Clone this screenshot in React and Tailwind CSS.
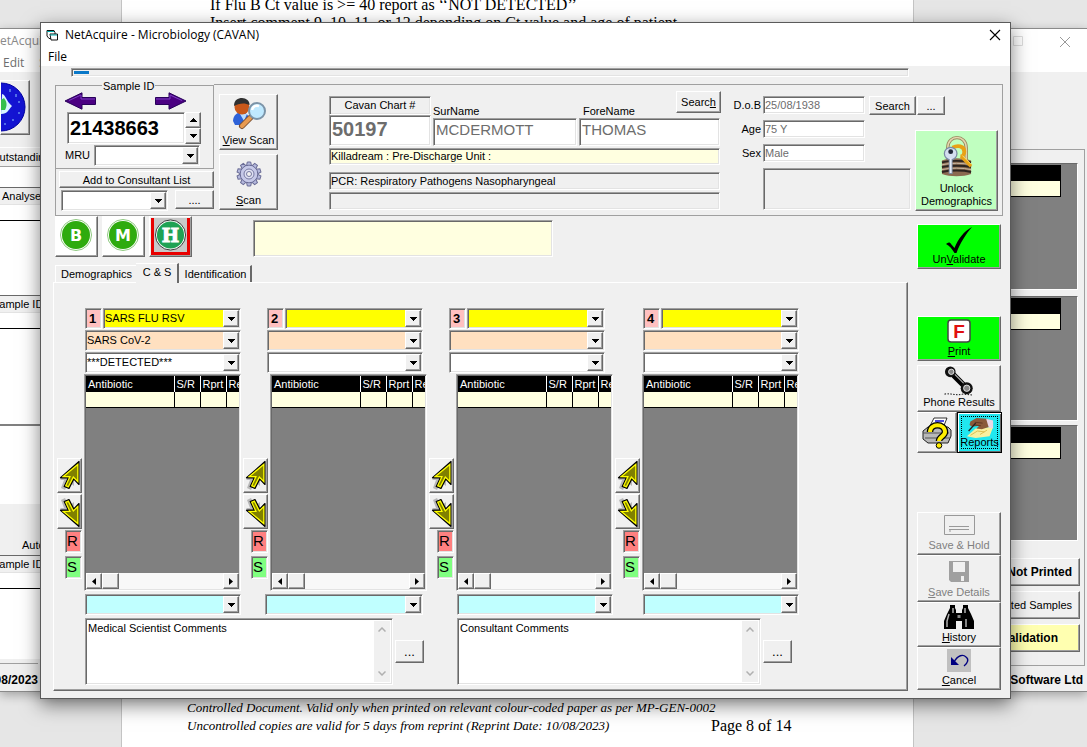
import React from "react";

const raised =
  "border border-t-white border-l-white border-r-[#696969] border-b-[#696969] shadow-[inset_-1px_-1px_0_#a0a0a0] bg-[#f0f0f0]";
const sunken =
  "border border-t-[#a0a0a0] border-l-[#a0a0a0] border-r-white border-b-white shadow-[inset_1px_1px_0_#696969,inset_-1px_-1px_0_#e3e3e3] outline-none";

function Key({ children }) {
  return <span className="underline">{children}</span>;
}

function ArrowHead({ className = "" }) {
  return (
    <svg viewBox="0 0 7 4" className={"h-1 w-[7px] " + className} shapeRendering="crispEdges" aria-hidden="true">
      <path d="M0 0h7v1H6v1H5v1H4v1H3V3H2V2H1V1H0z" fill="#000" />
    </svg>
  );
}

function Combo({ label, value = "", className = "", tone = "bg-white" }) {
  return (
    <div className={"relative h-[21px] " + className}>
      <select
        aria-label={label}
        defaultValue={value}
        className={"block h-full w-full appearance-none truncate rounded-none pr-5 pb-0.5 pl-px text-[11px] leading-4 text-black " + sunken + " " + tone}
      >
        <option value={value}>{value}</option>
      </select>
      <span className={"pointer-events-none absolute top-[2px] right-[2px] bottom-[2px] flex w-4 items-center justify-center " + raised}>
        <ArrowHead />
      </span>
    </div>
  );
}

function SideArrow({ flip }) {
  return (
    <svg viewBox="0 0 33 18" className="h-[18px] w-[33px]" aria-hidden="true">
      <g transform={flip ? "translate(33 0) scale(-1 1)" : undefined}>
        <path d="M1 9 18 .8V5.500h13.500v7H18v4.700z" fill="#4b0082" stroke="#28005a" strokeWidth="1" />
        <path d="M5 8.500 17 3v4h14" fill="none" stroke="#7a3fc0" strokeWidth="1" />
      </g>
    </svg>
  );
}

function PointerIcon({ down }) {
  return (
    <svg viewBox="0 0 22 32" className="h-8 w-[22px]" aria-hidden="true">
      <g transform={down ? "translate(0 32) scale(1 -1)" : undefined}>
        <path d="M1 20 15 6v20l-5-4-4 8-4-2 3-8z" fill="#b8b8b8" />
        <path d="M20 1.500v23L14.800 19 10 28.500 5.200 26.500 9.200 18 1.500 17.800z" fill="#808000" stroke="#000" strokeWidth="1.200" strokeLinejoin="round" />
        <path d="M18.800 4.500v17l-4.500-4.500-5 9.800-2.500-1.200 4.200-9-6.700-.1z" fill="none" stroke="#ffff00" strokeWidth="1.200" />
      </g>
    </svg>
  );
}

function ViewScanIcon() {
  return (
    <svg viewBox="0 0 34 34" className="h-[34px] w-[34px]" aria-hidden="true">
      <path d="M1 24c0-6 5-9 9-9s7 4 8 8l-5 5H3z" fill="#2e62d8" />
      <path d="M8 17l4 7 3-7z" fill="#b9dcff" />
      <circle cx="10" cy="10" r="7.500" fill="#c9581a" />
      <path d="M2 9C2 3 6 1 10 1s8 3 7.500 7C13 5.500 7 6 2 9z" fill="#303030" />
      <path d="m18 21-8 8" stroke="#7b5030" strokeWidth="6" strokeLinecap="round" />
      <path d="m18 21-8 8" stroke="#e89a50" strokeWidth="4" strokeLinecap="round" />
      <circle cx="25" cy="14" r="8" fill="#bfe9ff" stroke="#7c94a8" strokeWidth="2" />
      <path d="M20 13c1-4 4-5 7-4" stroke="#fff" strokeWidth="2.500" fill="none" />
    </svg>
  );
}

function GearIcon() {
  return (
    <svg viewBox="-13 -13 26 26" className="h-[26px] w-[26px]" aria-hidden="true">
      <g fill="#b4b8dc" stroke="#6a6c96" strokeWidth="1">
        {[0, 36, 72, 108, 144, 180, 216, 252, 288, 324].map((a) => (
          <path key={a} d="M-2.500-8-1.700-12h3.400L2.500-8z" transform={`rotate(${a})`} />
        ))}
        <circle r="8.800" />
      </g>
      <circle r="8.200" fill="#c6c9e8" />
      <circle r="5" fill="#dfe1f3" stroke="#7779a2" />
      <circle r="2.500" fill="#f0f0f0" stroke="#7779a2" />
    </svg>
  );
}

function LockIcon() {
  return (
    <svg viewBox="0 0 34 44" className="h-[43px] w-[33px]" aria-hidden="true">
      <path d="M8 25V13C8-1 27-1 27 13v12" fill="none" stroke="#9a8a60" strokeWidth="3.500" />
      <path d="M8 25V13C8-1 27-1 27 13v12" fill="none" stroke="#e6d8b0" strokeWidth="1.500" />
      <path d="M2 26c8-3 22-3 30 0v14c-8 3-22 3-30 0z" fill="#8a6a50" />
      <path d="M2 28c8-2 22-2 30 0M2 33c8-2 22-2 30 0M2 38c8-2 22-2 30 0" stroke="#2b2420" strokeWidth="2" fill="none" />
      <path d="M2 30.500c8-2 22-2 30 0M2 35.500c8-2 22-2 30 0" stroke="#c8b9a4" strokeWidth="1" fill="none" />
      <path d="M13 13c5-3 12-2 12 4 0 3-2 5-4 5" fill="none" stroke="#e8a216" strokeWidth="4" />
      <path d="m22 22 10 10" stroke="#e8a216" strokeWidth="3.500" />
      <path d="m23 21 9 9" stroke="#ffe06a" strokeWidth="1" />
      <circle cx="11" cy="19" r="6.500" fill="#d4dff0" stroke="#7a8aa4" strokeWidth="1.300" />
      <circle cx="11" cy="17" r="2.500" fill="#202838" />
      <path d="M11 25v15" stroke="#7e8ca4" strokeWidth="4" />
      <path d="M11 24v15" stroke="#e6edf8" strokeWidth="2" />
    </svg>
  );
}

function LetterBadge({ letter, hot }) {
  return (
    <svg viewBox="0 0 34 34" className="h-[34px] w-[34px]" aria-hidden="true">
      <circle cx="17" cy="17" r="15.500" fill="#fff" stroke={hot ? "#333" : "#8fca80"} strokeWidth="1" />
      <circle cx="17" cy="17" r="14" fill={hot ? "#1fa254" : "#2eab0e"} />
      <text
        x="17"
        y={hot ? "24" : "23"}
        textAnchor="middle"
        fontFamily={hot ? "'DejaVu Serif', serif" : "'DejaVu Sans', sans-serif"}
        fontWeight="bold"
        fontSize={hot ? "19" : "16"}
        fill="#fff"
        stroke="#fff"
        strokeWidth={hot ? "1" : "0"}
      >
        {letter}
      </text>
    </svg>
  );
}

function SideButton({ children, icon, className = "", disabled }) {
  return (
    <button
      type="button"
      disabled={disabled}
      className={"flex w-[84px] flex-col items-center justify-end text-[11px] leading-[13px] " + raised + " " + className}
    >
      {icon}
      <span className="whitespace-nowrap">{children}</span>
    </button>
  );
}

function ScrollArrow({ right }) {
  return (
    <span className={"flex h-4 w-4 items-center justify-center " + raised}>
      <svg viewBox="0 0 4 7" className="h-[7px] w-1" aria-hidden="true">
        <path d={right ? "M0 0v7l4-3.500z" : "M4 0v7L0 3.500z"} fill="#000" />
      </svg>
    </span>
  );
}

const heads = [
  ["Antibiotic", "w-[88px]"],
  ["S/R", "w-[26px]"],
  ["Rprt", "w-[26px]"],
  ["Res", "w-[60px]"],
];

function SensitivityGrid({ n }) {
  return (
    <div className="flex items-start gap-0.5">
      <div className="mt-[84px] flex w-[25px] flex-col items-end gap-px">
        <button type="button" aria-label={"Move up " + n} className={"flex h-[35px] w-full items-center justify-center " + raised}>
          <PointerIcon />
        </button>
        <button type="button" aria-label={"Move down " + n} className={"flex h-[35px] w-full items-center justify-center " + raised}>
          <PointerIcon down />
        </button>
        <span className={"h-[23px] w-[17px] pl-px text-[15px] leading-5 " + sunken + " bg-[#ff8080]"}>R</span>
        <span className={"mt-0.5 h-[23px] w-[17px] pl-px text-[15px] leading-5 " + sunken + " bg-[#80ff80]"}>S</span>
      </div>
      <div className={"flex h-[217px] w-[157px] flex-col overflow-hidden bg-[#808080] p-px " + sunken}>
        <div className="flex-1 overflow-hidden">
          <table className="w-[200px] table-fixed border-collapse text-left text-[11px]">
            <thead>
              <tr className="h-4 bg-black text-white">
                {heads.map(([t, w]) => (
                  <th key={t} scope="col" className={"overflow-hidden border-r border-white px-0.5 py-0 leading-[15px] font-normal " + w}>
                    {t}
                  </th>
                ))}
              </tr>
            </thead>
            <tbody>
              <tr className="h-[15px] bg-[#ffffe0]">
                {heads.map(([t]) => (
                  <td key={t} className="border-r border-b border-black p-0"></td>
                ))}
              </tr>
            </tbody>
          </table>
        </div>
        <div className="flex h-4 bg-[#f8f8f8]">
          <ScrollArrow />
          <span className={"h-4 w-[17px] " + raised}></span>
          <span className="flex-1"></span>
          <ScrollArrow right />
        </div>
      </div>
    </div>
  );
}

const organisms = [
  { n: 1, group: "SARS FLU RSV", name: "SARS CoV-2", result: "***DETECTED***", gap: "ml-8", cyan: "ml-8 w-[156px]" },
  { n: 2, gap: "ml-[26px]", cyan: "ml-[24px] w-[158px]" },
  { n: 3, gap: "ml-[26px]", cyan: "ml-[34px] w-[156px]" },
  { n: 4, gap: "ml-[38px]", cyan: "ml-[30px] w-[156px]" },
];

function CommentBox({ label, text, width }) {
  return (
    <div className="flex items-start gap-0.5">
      <div className={"flex h-[67px] bg-white p-0.5 " + sunken + " " + width}>
        <textarea
          aria-label={label}
          defaultValue={text}
          className="min-w-0 flex-1 resize-none overflow-hidden bg-white text-[11px] leading-[14px] outline-none"
        />
        <span className="flex w-4 flex-col items-center justify-between bg-[#f0f0f0] py-1.5">
          <svg viewBox="0 0 8 5" className="h-[5px] w-2" aria-hidden="true">
            <path d="m.5 4.500 3.500-3.500 3.500 3.500" fill="none" stroke="#b0b0b0" strokeWidth="1.500" />
          </svg>
          <svg viewBox="0 0 8 5" className="h-[5px] w-2" aria-hidden="true">
            <path d="m.5.5 3.500 3.500 3.500-3.500" fill="none" stroke="#b0b0b0" strokeWidth="1.500" />
          </svg>
        </span>
      </div>
      <button type="button" aria-label={"Choose " + label} className={"mt-[22px] h-[23px] w-[29px] text-[13px] leading-[18px] " + raised}>
        ...
      </button>
    </div>
  );
}

function DocumentPage() {
  return (
    <article className="absolute inset-y-0 right-[173px] left-[121px] flex flex-col justify-between border-x border-[#c4c4c4] bg-white font-['Liberation_Serif',serif] text-black">
      <div className="-mt-1 pl-[88px] text-[16px] leading-[18px] whitespace-nowrap">
        <p>If Flu B Ct value is &gt;= 40 report as ‘‘NOT DETECTED’’</p>
        <p>Insert comment 9, 10, 11, or 12 depending on Ct value and age of patient.</p>
      </div>
      <footer className="mr-4 ml-[63px] border-t border-black pb-3 pl-0.5 text-[13px] leading-[18px] whitespace-nowrap italic">
        <p>Controlled Document. Valid only when printed on relevant colour-coded paper as per MP-GEN-0002</p>
        <p className="flex items-center">
          <span className="w-[524px]">Uncontrolled copies are valid for 5 days from reprint (Reprint Date: 10/08/2023)</span>
          <span className="text-[16px] not-italic">Page 8 of 14</span>
        </p>
      </footer>
    </article>
  );
}

function BackList({ title, head, body }) {
  return (
    <div className={"border-t border-[#696969] text-[11px] " + body}>
      <div className={"border-b border-[#e3e3e3] leading-[16px] " + head}>{title}</div>
      <div className="h-4 border-b border-black bg-white"></div>
    </div>
  );
}

function BackGrid({ className }) {
  return (
    <div className={"mr-1.5 border-t border-r border-b border-t-[#696969] border-r-white border-b-white bg-[#808080] pt-px pr-4 " + className}>
      <div className="h-4 bg-black"></div>
      <div className="h-4 border-r border-b border-black bg-[#ffffe0]"></div>
    </div>
  );
}

function MainWindow() {
  return (
    <section className="absolute inset-x-0 top-7 h-[664px] border-t border-b border-[#8a8a8a] bg-[#f0f0f0] shadow-[0_3px_10px_rgba(0,0,0,0.3)]">
      <header className="flex h-[43px] justify-between bg-white font-['Open_Sans',sans-serif] text-[12px] text-[#8a8a8a]">
        <div className="-ml-[9px] flex flex-col justify-between pt-1 whitespace-nowrap">
          <span className="leading-4">NetAcquire</span>
          <span className="flex gap-[15px] pl-3 text-[#6d6d6d]">
            <span>Edit</span>
            <span>S</span>
          </span>
        </div>
        <div className="mr-4 flex gap-[36px] pt-[7px]">
          <svg viewBox="0 0 10 10" className="h-2.5 w-2.5" aria-hidden="true">
            <path d="M.5.5h9v9h-9z" fill="none" stroke="#ddd" />
          </svg>
          <svg viewBox="0 0 12 12" className="h-3 w-3" aria-hidden="true">
            <path d="m1 1 10 10M11 1 1 11" stroke="#999" />
          </svg>
        </div>
      </header>
      <div className="flex justify-between">
        <div className="w-12 whitespace-nowrap">
          <div className="flex h-[75px] gap-2.5 pt-2">
            <div className={"h-[55px] w-[31px] overflow-hidden " + raised}>
              <svg viewBox="0 0 30 52" className="h-[52px] w-[30px]" aria-hidden="true">
                <circle cx="0" cy="26" r="24" fill="#1414d2" stroke="#0000a0" strokeWidth="1" />
                <path d="M1 13c4 1 4 7 10 12-4 4-4 8-11 8z" fill="#d8f4ff" />
                <path d="M3 17c2 3 4 6 1 12H0V19z" fill="#35c04c" />
                <path d="M9 8v3M15 13v3M18 20v2M12 38v2M4 42v2M18 31v2" stroke="#8cc8ff" />
              </svg>
            </div>
            <div className={"h-[55px] w-2 " + raised}></div>
          </div>
          <div className="-ml-[9px] h-5 border-t border-b border-t-white border-b-[#a0a0a0] text-[11px] leading-[18px]">Outstanding</div>
          <div className="h-5 bg-white"></div>
          <BackList title="Analyser" head="pl-0.5 bg-[#f0f0f0]" body="h-[108px] bg-white" />
          <BackList title="Sample ID" head="-ml-2 bg-[#f0f0f0]" body="h-[129px] bg-white" />
          <div className="h-[80px] border-t-2 border-[#808080] bg-white"></div>
          <div className="flex h-[51px] items-end pb-0.5 pl-[22px] text-[11px]">Auto</div>
          <BackList title="Sample ID" head="-ml-2 bg-[#f0f0f0]" body="h-[104px] bg-white" />
          <div className="mt-1 -ml-10 w-[78px] border-t border-[#a0a0a0] pt-2 text-right text-[12px] leading-4 font-bold">11/08/2023</div>
        </div>
        <div className="w-[77px] whitespace-nowrap">
          <div className="mt-[77px] mr-0.5 flex h-[517px] flex-col border-t border-r border-b border-[#a0a0a0] pt-[13px]">
            <BackGrid className="h-[127px]" />
            <BackGrid className="mt-1.5 h-[125px]" />
            <BackGrid className="mt-1 h-[116px]" />
            <div className="mt-[17px] mr-1 flex flex-col gap-[5px] text-[12px]">
              <button type="button" className={"flex h-[28px] items-center justify-end pr-[7px] font-bold " + raised}>Not Printed</button>
              <button type="button" className={"flex h-[28px] items-center justify-end pr-[7px] text-[11px] " + raised}>ated Samples</button>
              <button
                type="button"
                className="flex h-[28px] items-center justify-end border border-t-white border-r-[#696969] border-b-[#696969] border-l-white bg-[#ffffb0] pr-[21px] font-bold shadow-[inset_-1px_-1px_0_#a0a0a0]"
              >
                alidation
              </button>
            </div>
          </div>
          <div className="pt-1.5 pr-1 text-right text-[12px] leading-4 font-bold">Software Ltd</div>
        </div>
      </div>
    </section>
  );
}

function SamplePanel() {
  return (
    <div className="flex w-[159px] shrink-0 flex-col">
      <fieldset className="h-[91px] min-w-0 border border-[#a0a0a0]">
        <legend className="ml-[46px] px-px pt-0.5 text-[11px] leading-3">Sample ID</legend>
        <div className="flex justify-between pr-[26px] pl-2">
          <button type="button" aria-label="Previous sample"><SideArrow /></button>
          <button type="button" aria-label="Next sample"><SideArrow flip /></button>
        </div>
        <div className="mt-0.5 flex pl-[11px]">
          <input aria-label="Sample ID" defaultValue="21438663" className={"h-[32px] w-[118px] bg-white px-0.5 text-[20px] font-bold " + sunken} />
          <span className="flex w-4 flex-col">
            <button type="button" aria-label="Increase" className={"flex flex-1 items-center justify-center " + raised}><ArrowHead className="rotate-180" /></button>
            <button type="button" aria-label="Decrease" className={"flex flex-1 items-center justify-center " + raised}><ArrowHead /></button>
          </span>
        </div>
        <div className="mt-px flex items-center pl-[9px] text-[11px]">
          <span className="w-[29px]">MRU</span>
          <Combo label="MRU" className="w-[106px]" />
        </div>
      </fieldset>
      <div className="flex flex-1 flex-col border-l border-[#a0a0a0] pt-0.5 pl-[3px] text-[11px]">
        <button type="button" className={"h-[17px] leading-[14px] " + raised}>Add to Consultant List</button>
        <div className="mt-0.5 flex justify-between pl-0.5">
          <Combo label="Consultant list" className="w-[107px]" />
          <button type="button" aria-label="More consultants" className={"h-[19px] w-[39px] leading-[14px] " + raised}>....</button>
        </div>
      </div>
    </div>
  );
}

function PatientPanel() {
  const grey = "text-[#6d6d6d]";
  return (
    <div className="mt-[6px] flex flex-1 border-t border-r border-[#a0a0a0] pr-1 pl-[5px] text-[11px]">
      <div className="flex w-[59px] flex-col gap-1 pt-[9px]">
        <button type="button" className={"flex h-14 flex-col items-center justify-between pt-0.5 pb-0.5 leading-[14px] " + raised}>
          <ViewScanIcon />
          <span><Key>V</Key>iew Scan</span>
        </button>
        <button type="button" className={"flex h-14 flex-col items-center justify-between pt-1.5 pb-0.5 leading-[14px] " + raised}>
          <GearIcon />
          <span><Key>S</Key>can</span>
        </button>
      </div>
      <div className="ml-[51px] flex flex-1 flex-col pt-1.5">
        <div className="flex items-end gap-0.5">
          <div className="w-[102px]">
            <label htmlFor="chart" className={"block h-[19px] text-center leading-[17px] " + sunken}>Cavan Chart #</label>
            <input id="chart" defaultValue="50197" className={"h-[31px] w-full bg-white px-0.5 pb-0.5 text-[20px] font-bold " + grey + " " + sunken} />
          </div>
          <div className="flex-1">
            <label htmlFor="surname" className="block leading-[13px]">SurName</label>
            <input id="surname" defaultValue="MCDERMOTT" className={"h-[28px] w-full bg-white px-0.5 pb-1.5 text-[15px] " + grey + " " + sunken} />
          </div>
          <div className="w-[141px]">
            <div className="-mr-px flex h-[27px] justify-between pl-1">
              <label htmlFor="forename" className="self-end leading-[13px]">ForeName</label>
              <button type="button" className={"h-[22px] w-[45px] leading-[18px] " + raised}>Searc<Key>h</Key></button>
            </div>
            <input id="forename" defaultValue="THOMAS" className={"h-[28px] w-full bg-white px-0.5 pb-1.5 text-[15px] " + grey + " " + sunken} />
          </div>
        </div>
        <div className={"mt-0.5 h-[17px] pl-px leading-[15px] " + sunken + " bg-[#ffffe0]"}>Killadream : Pre-Discharge Unit :</div>
        <div className={"mt-[7px] h-[18px] pl-px leading-4 " + sunken}>PCR: Respiratory Pathogens Nasopharyngeal</div>
        <div className={"mt-0.5 h-[18px] " + sunken}></div>
      </div>
      <div className="ml-[13px] flex flex-col pt-[11px]">
        <div className="flex gap-0.5">
          <label htmlFor="dob" className="w-7 text-right leading-[18px]">D.o.B</label>
          <input id="dob" defaultValue="25/08/1938" className={"h-[18px] w-[102px] bg-white pl-px " + grey + " " + sunken} />
          <button type="button" className={"ml-0.5 h-[19px] w-[47px] leading-4 " + raised}>Search</button>
          <button type="button" aria-label="More dates" className={"-ml-px h-[19px] w-7 leading-4 " + raised}>...</button>
        </div>
        <div className="mt-[5px] flex">
          <div className="flex flex-col gap-1.5">
            <div className="flex gap-0.5">
              <label htmlFor="age" className="w-7 text-right leading-[18px]">Age</label>
              <input id="age" defaultValue="75 Y" className={"h-[18px] w-[102px] bg-white pl-px " + grey + " " + sunken} />
            </div>
            <div className="flex gap-0.5">
              <label htmlFor="sex" className="w-7 text-right leading-[18px]">Sex</label>
              <input id="sex" defaultValue="Male" className={"h-[18px] w-[102px] bg-white pl-px " + grey + " " + sunken} />
            </div>
            <div className={"ml-[30px] h-[42px] w-[148px] " + sunken}></div>
          </div>
          <button
            type="button"
            className="mt-2.5 ml-1 flex h-[81px] w-[83px] flex-col items-center justify-between border border-t-white border-r-[#696969] border-b-[#696969] border-l-white bg-[#c0ffc0] pt-1 pb-0.5 leading-[13px] shadow-[inset_-1px_-1px_0_#a0a0a0]"
          >
            <LockIcon />
            <span>Unlock<br />Demographics</span>
          </button>
        </div>
      </div>
    </div>
  );
}

function CultureTab() {
  return (
    <div className="border border-t-white border-r-[#696969] border-b-[#696969] border-l-white pt-[25px] pb-[5px] shadow-[inset_-1px_-1px_0_#a0a0a0]">
      <div className="-ml-px flex">
        {organisms.map((o) => (
          <div key={o.n} className={"flex w-[156px] flex-col gap-px " + o.gap}>
            <div className="flex gap-px">
              <span className={"h-[21px] w-[17px] pl-[3px] text-[13px] leading-[19px] font-bold " + sunken + " bg-[#ffc0c0]"}>{o.n}</span>
              <Combo label={"Organism group " + o.n} value={o.group} tone="bg-[#ffff00]" className="flex-1" />
            </div>
            <Combo label={"Organism " + o.n} value={o.name} tone="bg-[#ffe0c0]" />
            <Combo label={"Result " + o.n} value={o.result} />
          </div>
        ))}
      </div>
      <div className="flex gap-0.5 pt-px pl-[3px]">
        {organisms.map((o) => (
          <SensitivityGrid key={o.n} n={o.n} />
        ))}
      </div>
      <div className="mt-[3px] -ml-px flex">
        {organisms.map((o) => (
          <Combo key={o.n} label={"Antibiotic to add " + o.n} tone="bg-[#c0ffff]" className={o.cyan} />
        ))}
      </div>
      <div className="mt-[3px] flex gap-[33px] pl-[31px]">
        <CommentBox label="Medical Scientist Comments" text="Medical Scientist Comments" width="w-[308px]" />
        <CommentBox label="Consultant Comments" text="Consultant Comments" width="w-[304px]" />
      </div>
    </div>
  );
}

function SideButtons() {
  return (
    <div className="flex w-[86px] shrink-0 flex-col pt-2">
      <button
        type="button"
        className="flex h-[45px] w-[84px] flex-col items-center justify-end border border-t-white border-r-[#696969] border-b-[#696969] border-l-white bg-[#00ff00] pb-0.5 text-[11px] leading-[13px] shadow-[inset_-1px_-1px_0_#a0a0a0]"
      >
        <svg viewBox="0 0 26 26" className="h-[26px] w-[26px]" aria-hidden="true">
          <path d="M0 17c2-2 4-2 5 0l3.500 4C12 12 18 4 26 0 20 7 14 16 10.500 26H8.500C6 22 4 19 0 17z" fill="#000" />
        </svg>
        <span>Un<Key>V</Key>alidate</span>
      </button>
      <button
        type="button"
        className="mt-[47px] flex h-[45px] w-[84px] flex-col items-center justify-end gap-0.5 border border-t-white border-r-[#696969] border-b-[#696969] border-l-white bg-[#00ff00] pb-0.5 text-[11px] leading-[13px] shadow-[inset_-1px_-1px_0_#a0a0a0]"
      >
        <svg viewBox="0 0 24 24" className="h-6 w-6" aria-hidden="true">
          <rect x="1" y="1" width="22" height="22" rx="3" fill="#fff" stroke="#444" strokeWidth="1.500" />
          <text x="12" y="18.500" textAnchor="middle" fontFamily="Liberation Sans, sans-serif" fontWeight="bold" fontSize="19" fill="#e01010">F</text>
        </svg>
        <span><Key>P</Key>rint</span>
      </button>
      <SideButton
        className="mt-1 h-[47px] pb-0.5"
        icon={
          <svg viewBox="0 0 32 31" className="h-[30px] w-8" aria-hidden="true">
            <path d="m8 7 17 17" stroke="#000" strokeWidth="6" />
            <path d="m10 7 15 15" stroke="#aaa" strokeWidth="1.200" />
            <circle cx="7" cy="6" r="5.500" fill="#111" />
            <circle cx="8" cy="6" r="2.800" fill="#888" stroke="#fff" strokeWidth=".8" />
            <circle cx="24" cy="23" r="6.200" fill="#111" />
            <circle cx="24" cy="23" r="3.300" fill="#888" stroke="#fff" strokeWidth=".8" />
            <path d="M1 29c8-1 12 2 19 0l10 1" fill="none" stroke="#000" strokeDasharray="1.500 1.500" />
          </svg>
        }
      >
        Phone Results
      </SideButton>
      <div className="flex">
        <button type="button" aria-label="Print queries" className={"flex h-[41px] w-10 shrink-0 items-center justify-center " + raised}>
          <svg viewBox="0 0 32 33" className="h-[33px] w-8" aria-hidden="true">
            <path d="M8 12 13 2h13l-4 10z" fill="#fff" stroke="#000" strokeWidth=".8" />
            <path d="M14 5h9M13 8h8" stroke="#1010d0" strokeWidth="1.300" />
            <path d="m2 15 5-4h20l3 3v6l-3 7H7l-5-4z" fill="#b8b8b8" stroke="#222" />
            <path d="M2 17h26M4 22h25" stroke="#555" />
            <path d="M9 16c0-9 15-9 15 0 0 4-6 5-6 9" fill="none" stroke="#000" strokeWidth="6.500" />
            <path d="M9 16c0-9 15-9 15 0 0 4-6 5-6 9" fill="none" stroke="#ffee00" strokeWidth="4" />
            <circle cx="18" cy="29.500" r="2.800" fill="#ffee00" stroke="#000" />
          </svg>
        </button>
        <button type="button" className="flex h-[41px] w-[45px] shrink-0 items-center justify-center border border-black bg-[#20e8f0] p-[3px] text-[11px] shadow-[inset_1px_1px_0_#fff,inset_-1px_-1px_0_#696969]">
          <span className="flex h-full w-full flex-col items-center justify-end border border-dotted border-black leading-[12px]">
            <svg viewBox="0 0 32 24" className="-mb-0.5 h-[22px] w-8" aria-hidden="true">
              <path d="m1 22 10-9 20-2-4 11-16 2z" fill="#f8f0a0" />
              <path d="m5 21 8-5 8 1M16 20l8-5" stroke="#d8b848" fill="none" />
              <path d="m5 5 7-4 12 1 3 2v7l-9 3-6-1 3-3-8 1-3-2z" fill="#8a5a3a" />
              <path d="m10 6 9 1M9 9l8 1" stroke="#5a3420" />
              <path d="m23 2 8 2v9l-5-1z" fill="#e8d8e8" />
              <path d="m3 16 8-9" stroke="#222" strokeWidth="1.500" />
            </svg>
            Reports
          </span>
        </button>
      </div>
      <div className="mt-[59px] flex flex-col">
        <SideButton
          disabled
          className="h-[43px] pb-0.5 text-[#808080]"
          icon={
            <svg viewBox="0 0 31 20" className="mb-1 h-5 w-[31px]" aria-hidden="true">
              <path d="M.5.500h30v19H.500zM5 11.500h20M5 14.500h20" fill="none" stroke="#999" />
              <path d="M5 16h2" stroke="#999" />
            </svg>
          }
        >
          Save &amp; Hold
        </SideButton>
        <SideButton
          disabled
          className="h-[47px] pb-0.5 text-[#808080]"
          icon={
            <svg viewBox="0 0 20 21" className="mb-1 h-[21px] w-5" aria-hidden="true">
              <path d="M0 0h20v21H2l-2-2z" fill="#a0a0a0" />
              <path d="M4 1h12v10H4z" fill="#f0f0f0" />
              <path d="M5 14h10v7H5z" fill="#a0a0a0" />
              <path d="M12 15h3v5h-3z" fill="#f0f0f0" />
            </svg>
          }
        >
          <Key>S</Key>ave Details
        </SideButton>
        <SideButton
          className="h-[45px] pb-0.5"
          icon={
            <svg viewBox="0 0 30 24" className="mb-0.5 h-6 w-[30px]" aria-hidden="true">
              <path d="M6 0h5v3l1 2v3h6V5l1-2V0h5v3l3 6 3 7v8H18v-8h-6v8H0v-8l3-7 3-6z" fill="#000" />
              <path d="M5 9 3 16v6M9 3v5M21 3v5M22 14v8" stroke="#b0b0b0" strokeWidth="1.500" fill="none" />
              <path d="M13.500 10h3v3h-3z" fill="#888" />
            </svg>
          }
        >
          <Key>H</Key>istory
        </SideButton>
        <SideButton
          className="h-[43px] pb-0.5"
          icon={
            <svg viewBox="0 0 24 23" className="mb-0.5 h-[23px] w-6" aria-hidden="true">
              <path d="M0 0h24v23H0z" fill="#c0c0c0" />
              <path d="M4 8v8h8z" fill="#000080" />
              <path d="M7 13c4-7 9-8 12-5 3 2 2 6-2 9" fill="none" stroke="#000080" strokeWidth="1.400" />
            </svg>
          }
        >
          <Key>C</Key>ancel
        </SideButton>
      </div>
    </div>
  );
}

export default function App() {
  return (
    <main className="relative h-screen min-h-[747px] overflow-hidden bg-[#e6e6e6] font-['Liberation_Sans',Arial,sans-serif] text-black">
      <DocumentPage />
      <MainWindow />
      <section className="absolute top-[22px] right-[76px] left-10 border border-[#5a5a5a] bg-[#f0f0f0] shadow-[0_6px_18px_rgba(0,0,0,0.5)]">
        <header className="bg-white font-['Open_Sans',sans-serif] text-[12px]">
          <div className="flex h-6 items-center justify-between pr-[9px] pl-[5px]">
            <h1 className="flex items-center gap-1.5">
              <svg viewBox="0 0 13 12" className="h-3 w-[13px]" aria-hidden="true">
                <path d="M1 1.500h7l1 2v6H3L1 7z" fill="#fff" stroke="#111" />
                <path d="M4 5h7.500v6H5z" fill="#fff" stroke="#111" />
                <path d="M1 2.500h7" stroke="#0aa" />
                <path d="M4 6h7" stroke="#0aa" />
              </svg>
              NetAcquire - Microbiology (CAVAN)
            </h1>
            <button type="button" aria-label="Close">
              <svg viewBox="0 0 12 12" className="h-3 w-3" aria-hidden="true">
                <path d="m1 1 10 10M11 1 1 11" stroke="#000" strokeWidth="1.100" />
              </svg>
            </button>
          </div>
          <nav className="flex h-[19px] items-center pl-[7px]">
            <button type="button">File</button>
          </nav>
        </header>
        <div className="pt-0.5 pr-[101px] pl-[30px]">
          <div role="progressbar" aria-label="Progress" className={"h-[9px] p-0.5 " + sunken}>
            <div className="h-[3px] w-[15px] bg-[#0a78c8]"></div>
          </div>
        </div>
        <div className="mt-px mr-[7px] ml-3.5 flex h-[138px] border-b border-[#a0a0a0]">
          <SamplePanel />
          <PatientPanel />
        </div>
        <div className="flex gap-[9px] pr-[7px] pb-[7px] pl-3">
          <div className="min-w-0 flex-1">
            <div className="flex items-start pl-0.5">
              <button type="button" aria-label="Biochemistry" className="flex h-[41px] w-[43px] items-start justify-center border border-t-white border-r-[#696969] border-b-[#696969] border-l-white bg-white pt-px pr-0.5 shadow-[inset_-1px_-1px_0_#a0a0a0]">
                <LetterBadge letter="B" />
              </button>
              <button type="button" aria-label="Microbiology" className="ml-1 flex h-[41px] w-[43px] items-start justify-center border border-t-white border-r-[#696969] border-b-[#696969] border-l-white bg-white pt-px pr-0.5 shadow-[inset_-1px_-1px_0_#a0a0a0]">
                <LetterBadge letter="M" />
              </button>
              <button type="button" aria-label="Haematology" className="ml-1 flex h-[41px] w-[43px] items-start justify-center border border-t-white border-r-[#696969] border-b-[#696969] border-l-white p-px shadow-[inset_-1px_-1px_0_#a0a0a0]">
                <span className="flex h-[37px] w-full justify-center border-r-[3px] border-b-[3px] border-l-[3px] border-[#e80000] bg-[#c8c8c8]">
                  <LetterBadge letter="H" hot />
                </span>
              </button>
              <div className={"mt-1 ml-[61px] h-[37px] w-[300px] " + sunken + " bg-[#ffffe0]"}></div>
            </div>
            <div role="tablist" className="mt-1.5 flex h-[19px] items-end pl-0.5 text-[11px]">
              <button type="button" role="tab" className="h-[17px] w-[81px] border-t border-l border-white pl-px">Demographics</button>
              <button type="button" role="tab" aria-selected="true" className="-mb-px h-5 w-[43px] border-t border-r-2 border-t-white border-r-[#696969] bg-[#f0f0f0] pb-0.5 pl-px">C &amp; S</button>
              <button type="button" role="tab" className="h-[17px] w-[73px] border-t border-r-2 border-t-white border-r-[#696969] pl-0.5">Identification</button>
            </div>
            <CultureTab />
          </div>
          <SideButtons />
        </div>
      </section>
    </main>
  );
}
